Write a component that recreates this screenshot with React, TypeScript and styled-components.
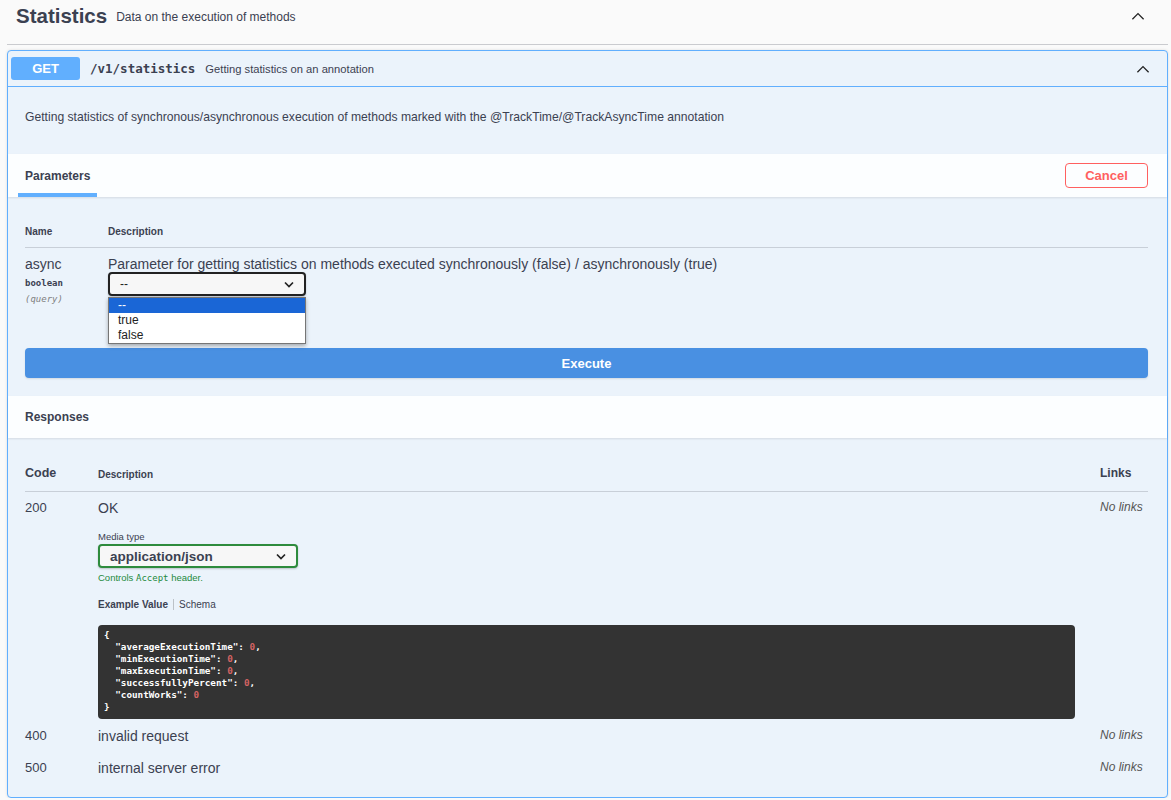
import styled, { createGlobalStyle } from "styled-components";

const GlobalStyle = createGlobalStyle`
  body {
    margin: 0;
    background: #fafafa;
    font-family: "Liberation Sans", Arial, sans-serif;
    color: #3b4151;
  }
`;

const Page = styled.div`
  padding: 0 3px 0 7px;
`;

const TagHeader = styled.div`
  display: flex;
  align-items: center;
  box-sizing: border-box;
  height: 45px;
  padding: 0 22px 12px 9px;
  border-bottom: 1px solid rgba(59, 65, 81, 0.25);
`;

const TagTitle = styled.h3`
  margin: 0;
  font-size: 20.5px;
  font-weight: 700;
  color: #3b4151;
`;

const TagDesc = styled.span`
  margin-left: 9px;
  font-size: 12px;
  flex: 1;
  margin-top: 2px;
`;

const Chevron = ({ size = 16 }: { size?: number }) => (
  <svg width={size} height={size} viewBox="0 0 20 20" fill="none">
    <path d="M3 14 L10 7 L17 14" stroke="#222" strokeWidth="1.6" />
  </svg>
);

const Opblock = styled.div`
  margin-top: 5px;
  border: 1px solid #61affe;
  border-radius: 4px;
  background: #ebf3fb;
  box-shadow: 0 0 3px rgba(0, 0, 0, 0.12);
`;

const Summary = styled.div`
  display: flex;
  align-items: center;
  height: 35px;
  padding: 0 16px 0 3px;
  border-bottom: 1px solid #61affe;
`;

const MethodBadge = styled.span`
  display: inline-flex;
  align-items: center;
  justify-content: center;
  width: 69px;
  height: 23px;
  border-radius: 3px;
  background: #61affe;
  color: #fff;
  font-size: 13px;
  font-weight: 700;
`;

const Path = styled.span`
  margin-left: 10px;
  font-family: "DejaVu Sans Mono", monospace;
  font-size: 12.5px;
  font-weight: 700;
  color: #3b4151;
`;

const SummaryDesc = styled.span`
  margin-left: 10px;
  font-size: 11.2px;
  flex: 1;
`;

const Description = styled.div`
  box-sizing: border-box;
  height: 67px;
  padding: 23px 17px 0;
  font-size: 12.15px;
`;

const SectionHeader = styled.div<{ $h: number }>`
  display: flex;
  align-items: center;
  height: ${(p) => p.$h}px;
  padding: 0 19px 0 17px;
  background: rgba(255, 255, 255, 0.85);
  box-shadow: 0 1px 2px rgba(0, 0, 0, 0.1);
`;

const Tab = styled.div`
  align-self: stretch;
  display: flex;
  align-items: center;
  padding: 0 7px;
  margin-left: -7px;
  margin-top: 4px;
  border-bottom: 4px solid #61affe;
  font-size: 12px;
  font-weight: 700;
  flex: none;
`;

const SectionTitle = styled.div`
  font-size: 12px;
  font-weight: 700;
  flex: 1;
`;

const CancelButton = styled.button`
  margin-left: auto;
  width: 83px;
  height: 25px;
  border: 1px solid #ff6060;
  border-radius: 4px;
  background: transparent;
  color: #ff6060;
  font-family: inherit;
  font-size: 13px;
  font-weight: 700;
`;

const Body = styled.div`
  padding: 0 19px 0 17px;
`;

const HeadRow = styled.div<{ $h: number; $pb: number }>`
  display: flex;
  align-items: flex-end;
  box-sizing: border-box;
  height: ${(p) => p.$h}px;
  padding-bottom: ${(p) => p.$pb}px;
  border-bottom: 1px solid rgba(59, 65, 81, 0.2);
`;

const HeadCell = styled.div<{ $w?: number; $size?: number }>`
  width: ${(p) => (p.$w ? `${p.$w}px` : "auto")};
  flex: ${(p) => (p.$w ? "none" : 1)};
  font-size: ${(p) => p.$size ?? 10}px;
  font-weight: 700;
`;

const ParamRow = styled.div`
  display: flex;
  padding-top: 8px;
`;

const ParamName = styled.div`
  width: 83px;
  flex: none;
`;

const NameText = styled.div`
  font-size: 14px;
`;

const TypeText = styled.div`
  font-family: "DejaVu Sans Mono", monospace;
  font-size: 9px;
  font-weight: 700;
  margin-top: 6px;
`;

const InText = styled.div`
  font-family: "DejaVu Sans Mono", monospace;
  font-size: 9px;
  font-style: italic;
  color: #808080;
  margin-top: 6px;
`;

const ParamDesc = styled.div`
  flex: 1;
  font-size: 14px;
`;

const SelectWrap = styled.div`
  position: relative;
  width: 198px;
`;

const SelectBox = styled.div<{ $color: string; $w: number }>`
  display: flex;
  align-items: center;
  justify-content: space-between;
  box-sizing: border-box;
  width: ${(p) => p.$w}px;
  height: 24px;
  padding: 0 10px;
  border: 2px solid ${(p) => p.$color};
  border-radius: 4px;
  background: #f7f7f7;
  font-size: 12px;
  box-shadow: 0 1px 2px rgba(0, 0, 0, 0.2);
`;

const SelectValue = styled.span<{ $bold?: boolean }>`
  font-weight: ${(p) => (p.$bold ? 700 : 400)};
  font-size: ${(p) => (p.$bold ? 13.5 : 12)}px;
  color: ${(p) => (p.$bold ? "#3b4151" : "#222")};
`;

const DownArrow = () => (
  <svg width="10" height="7" viewBox="0 0 10 7">
    <path d="M1 1.5 L5 5.5 L9 1.5" stroke="#222" strokeWidth="1.7" fill="none" />
  </svg>
);

const Dropdown = styled.div`
  position: absolute;
  top: 25px;
  left: 0;
  width: 198px;
  box-sizing: border-box;
  border: 1px solid #767676;
  background: #fff;
  box-shadow: 0 2px 4px rgba(0, 0, 0, 0.3);
  z-index: 2;
`;

const Option = styled.div<{ $active?: boolean }>`
  height: 15px;
  line-height: 15px;
  padding: 0 9px;
  font-size: 12px;
  color: ${(p) => (p.$active ? "#fff" : "#222")};
  background: ${(p) => (p.$active ? "#1a66d6" : "transparent")};
`;

const ExecuteButton = styled.button`
  display: block;
  width: 100%;
  height: 30px;
  margin: 44px 0 18px;
  border: none;
  border-radius: 4px;
  background: #4990e2;
  color: #fff;
  font-family: inherit;
  font-size: 13px;
  font-weight: 700;
  box-shadow: 0 1px 2px rgba(0, 0, 0, 0.1);
`;

const RespRow = styled.div<{ $pt: number; $pb?: number }>`
  display: flex;
  padding-top: ${(p) => p.$pt}px;
  padding-bottom: ${(p) => p.$pb ?? 0}px;
`;

const CodeCell = styled.div`
  width: 73px;
  flex: none;
  font-size: 13px;
`;

const RespDesc = styled.div`
  flex: 1;
  padding-right: 25px;
`;

const RespTitle = styled.div`
  font-size: 14px;
`;

const LinksCell = styled.div`
  width: 48px;
  flex: none;
  font-size: 12px;
  font-style: italic;
  color: #555;
`;

const SmallLabel = styled.div`
  font-size: 9.5px;
  margin: 15px 0 2px;
`;

const AcceptNote = styled.div`
  margin-top: 4px;
  font-size: 9.5px;
  color: #248a3d;

  code {
    font-family: "DejaVu Sans Mono", monospace;
    font-size: 9px;
  }
`;

const ExampleTabs = styled.div`
  display: flex;
  align-items: center;
  margin-top: 16px;
  font-size: 10px;
`;

const ExTab = styled.span<{ $active?: boolean }>`
  font-weight: ${(p) => (p.$active ? 700 : 400)};
  padding: 0 5px;
  &:first-child {
    padding-left: 0;
    border-right: 1px solid rgba(0, 0, 0, 0.2);
  }
`;

const CodeBlock = styled.pre`
  margin: 15px 0 0;
  padding: 4px 6px 6px;
  border-radius: 4px;
  background: #333;
  color: #fff;
  font-family: "DejaVu Sans Mono", monospace;
  font-size: 9.3px;
  font-weight: 700;
  line-height: 12px;
`;

const Num = styled.span`
  color: #d36363;
`;

const json = [
  ["averageExecutionTime", true],
  ["minExecutionTime", true],
  ["maxExecutionTime", true],
  ["successfullyPercent", true],
  ["countWorks", false],
] as const;

export default function App() {
  return (
    <Page>
      <GlobalStyle />
      <TagHeader>
        <TagTitle>Statistics</TagTitle>
        <TagDesc>Data on the execution of methods</TagDesc>
        <Chevron />
      </TagHeader>

      <Opblock>
        <Summary>
          <MethodBadge>GET</MethodBadge>
          <Path>/v1/statistics</Path>
          <SummaryDesc>Getting statistics on an annotation</SummaryDesc>
          <Chevron />
        </Summary>

        <Description>
          Getting statistics of synchronous/asynchronous execution of methods marked with the
          @TrackTime/@TrackAsyncTime annotation
        </Description>

        <SectionHeader $h={43}>
          <Tab>Parameters</Tab>
          <CancelButton>Cancel</CancelButton>
        </SectionHeader>

        <Body>
          <HeadRow $h={51} $pb={10}>
            <HeadCell $w={83}>Name</HeadCell>
            <HeadCell>Description</HeadCell>
          </HeadRow>
          <ParamRow>
            <ParamName>
              <NameText>async</NameText>
              <TypeText>boolean</TypeText>
              <InText>(query)</InText>
            </ParamName>
            <ParamDesc>
              Parameter for getting statistics on methods executed synchronously (false) /
              asynchronously (true)
              <SelectWrap>
                <SelectBox $color="#222" $w={198}>
                  <SelectValue>--</SelectValue>
                  <DownArrow />
                </SelectBox>
                <Dropdown>
                  <Option $active>--</Option>
                  <Option>true</Option>
                  <Option>false</Option>
                </Dropdown>
              </SelectWrap>
            </ParamDesc>
          </ParamRow>
          <ExecuteButton>Execute</ExecuteButton>
        </Body>

        <SectionHeader $h={42}>
          <SectionTitle>Responses</SectionTitle>
        </SectionHeader>

        <Body>
          <HeadRow $h={54} $pb={11}>
            <HeadCell $w={73} $size={12.5}>
              Code
            </HeadCell>
            <HeadCell>Description</HeadCell>
            <HeadCell $w={48} $size={12}>
              Links
            </HeadCell>
          </HeadRow>

          <RespRow $pt={8}>
            <CodeCell>200</CodeCell>
            <RespDesc>
              <RespTitle>OK</RespTitle>
              <SmallLabel>Media type</SmallLabel>
              <SelectBox $color="#2e8b3d" $w={200}>
                <SelectValue $bold>application/json</SelectValue>
                <DownArrow />
              </SelectBox>
              <AcceptNote>
                Controls <code>Accept</code> header.
              </AcceptNote>
              <ExampleTabs>
                <ExTab $active>Example Value</ExTab>
                <ExTab>Schema</ExTab>
              </ExampleTabs>
              <CodeBlock>
                {"{\n"}
                {json.map(([k, comma]) => (
                  <span key={k}>
                    {`  "${k}": `}
                    <Num>0</Num>
                    {comma ? ",\n" : "\n"}
                  </span>
                ))}
                {"}"}
              </CodeBlock>
            </RespDesc>
            <LinksCell>No links</LinksCell>
          </RespRow>

          <RespRow $pt={9}>
            <CodeCell>400</CodeCell>
            <RespDesc>
              <RespTitle>invalid request</RespTitle>
            </RespDesc>
            <LinksCell>No links</LinksCell>
          </RespRow>

          <RespRow $pt={16} $pb={21}>
            <CodeCell>500</CodeCell>
            <RespDesc>
              <RespTitle>internal server error</RespTitle>
            </RespDesc>
            <LinksCell>No links</LinksCell>
          </RespRow>
        </Body>
      </Opblock>
    </Page>
  );
}
